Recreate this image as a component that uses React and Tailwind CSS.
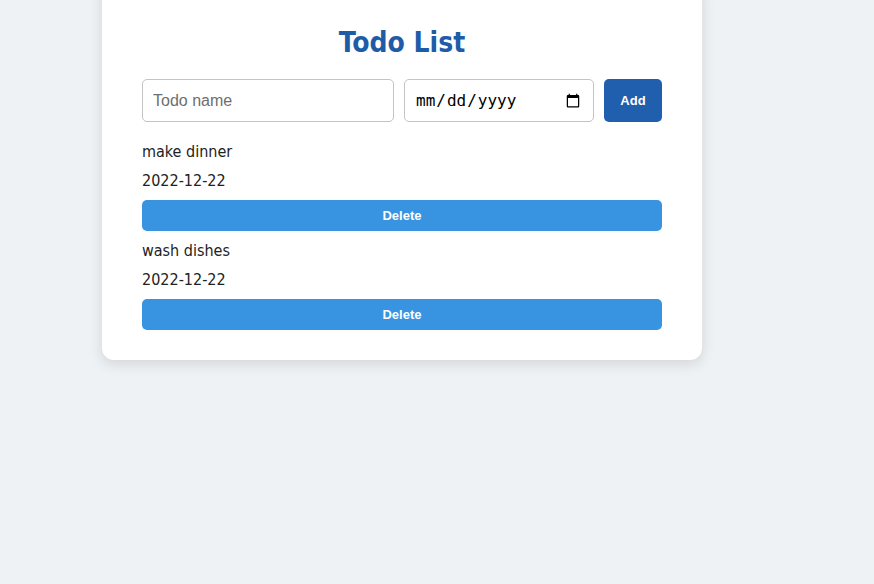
export default function App() {
  const todos = [
    { name: "make dinner", date: "2022-12-22" },
    { name: "wash dishes", date: "2022-12-22" },
  ];
  return (
    <div className="min-h-[584px] w-full overflow-hidden bg-[#eff2f5]">
      <div className="-mt-[20px] ml-[102px] w-[600px] rounded-xl bg-white px-[40px] pt-[41px] pb-[30px] shadow-[0_4px_14px_rgba(0,0,0,0.12)]">
        <h1 className="h-[44px] text-center font-['DejaVu_Sans',sans-serif] text-[28px] leading-[44px] font-bold font-stretch-condensed text-[#1e5ca8]">
          Todo List
        </h1>
        <div className="mt-[14px] flex gap-[10px]">
          <input
            type="text"
            placeholder="Todo name"
            className="h-[43px] w-[252px] rounded-[5px] border border-[#c4c4c4] px-[10px] font-['Liberation_Sans',Arial,sans-serif] text-[16px] text-[#222] outline-none placeholder:text-[#6e6e6e]"
          />
          <input
            type="date"
            className="h-[43px] w-[190px] rounded-[5px] border border-[#c4c4c4] px-[10px] font-['DejaVu_Sans_Mono',monospace] text-[16px] text-black outline-none"
          />
          <button className="h-[43px] w-[58px] rounded-[5px] bg-[#1f5fad] font-['Liberation_Sans',Arial,sans-serif] text-[13px] font-bold text-white">
            Add
          </button>
        </div>
        <div className="mt-[15px] flex flex-col gap-[5px]">
          {todos.map((t, i) => (
            <div key={i} className="flex flex-col font-['DejaVu_Sans',sans-serif] text-[16px] leading-[28px] font-stretch-condensed text-[#222]">
              <div className="h-[29px] pt-[1px]">{t.name}</div>
              <div className="h-[29px] pt-[1px]">{t.date}</div>
              <button className="mt-[5px] h-[31px] w-full rounded-[5px] bg-[#3894e0] font-['Liberation_Sans',Arial,sans-serif] text-[13px] leading-normal font-bold font-stretch-normal text-white">
                Delete
              </button>
            </div>
          ))}
        </div>
      </div>
    </div>
  );
}
